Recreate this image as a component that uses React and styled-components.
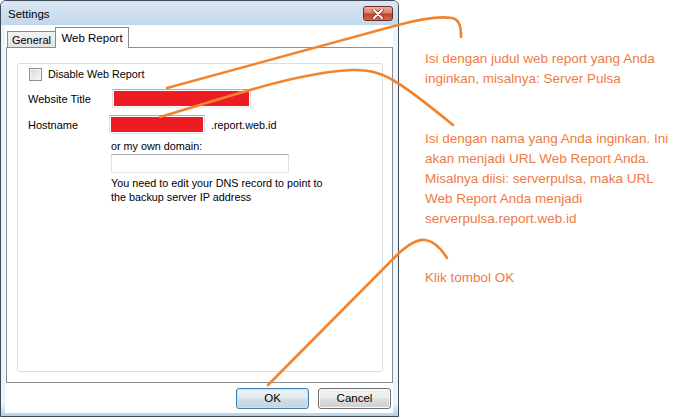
import React from 'react';
import styled, { createGlobalStyle } from 'styled-components';

const Global = createGlobalStyle`
body {
    margin: 0;
    background: #fff;
    font-family: 'Liberation Sans', Arial, sans-serif;
}
`

const Page = styled.div`
position: relative;
width: 699px;
height: 418px;
display: flex;
background: #fff;
overflow: hidden;
`

const Window = styled.div`
width: 397px;
height: 415px;
display: flex;
flex-direction: column;
border: 1px solid #3d4a57;
border-radius: 6px 6px 0 0;
background: linear-gradient(to bottom, #eef4f9 0%, #eef4f9 97%, #b3d0e8 100%);
font-size: 10.8px;
color: #000;
`

const TitleBar = styled.div`
height: 24px;
display: flex;
justify-content: space-between;
padding: 0 5px 0 7px;
border-radius: 5px 5px 0 0;
background: linear-gradient(to bottom, #dbe7f3, #c3d7eb);
`

const Title = styled.span`
font-size: 11.5px;
line-height: 26px;
`

const CloseButton = styled.div`
width: 28px;
height: 13px;
margin-top: 5px;
display: flex;
align-items: center;
justify-content: center;
border: 1px solid #6b2f26;
border-radius: 3px;
background: linear-gradient(to bottom, #eab1a3 0%, #dc8068 45%, #c0412a 55%, #d26d50 100%);
`

const Client = styled.div`
flex: 1;
display: flex;
flex-direction: column;
margin: 0 5px 3px 4px;
padding-left: 1px;
background: #fff;
`

const TabRow = styled.div`
height: 21px;
margin-top: 2px;
padding-left: 1px;
display: flex;
align-items: flex-end;
`

const Tab = styled.div`
position: ${p => p.$active ? 'relative' : 'static'};
z-index: ${p => p.$active ? 2 : 'auto'};
width: ${p => p.$w}px;
height: ${p => p.$active ? 21 : 17}px;
margin-left: ${p => p.$active ? -1 : 0}px;
box-sizing: border-box;
border: 1px solid #898c95;
border-bottom: none;
background: ${p => p.$active ? '#fff' : 'linear-gradient(to bottom, #f2f2f2, #e3e3e3)'};
text-align: center;
font-size: ${p => p.$active ? 11.5 : 11}px;
line-height: ${p => p.$active ? 20 : 17}px;
`

const Panel = styled.div`
position: relative;
z-index: 1;
height: 336px;
margin-top: -1px;
box-sizing: border-box;
border: 1px solid #898c95;
background: #fff;
display: flex;
`

const GroupBox = styled.div`
flex: 1;
margin: 15px 9px 10px 10px;
border: 1px solid #d5dfe5;
border-radius: 3px;
padding-top: 3px;
`

const CheckRow = styled.label`
display: flex;
align-items: center;
height: 14px;
padding-left: 11px;
`

const CheckBox = styled.span`
width: 11px;
height: 11px;
border: 1px solid #8e8f8f;
background: linear-gradient(135deg, #d8d8d8, #f8f8f8);
box-shadow: inset 0 0 0 1px #f4f4f4;
margin-right: 6px;
`

const FieldRow = styled.div`
display: flex;
align-items: center;
height: 19px;
margin-top: ${p => p.$mt}px;
padding-left: 10px;
`

const Label = styled.span`
width: 83px;
font-size: 11px;
`

const Input = styled.div`
width: ${p => p.$w}px;
height: 19px;
box-sizing: border-box;
margin-left: ${p => p.$ml || 0}px;
border: 1px solid;
border-color: #abadb3 #dbdfe6 #e3e9ef #e2e3ea;
background: #fff;
padding: ${p => p.$red ? '1px' : 0};
`

const RedFill = styled.div`
height: 100%;
background: #ed1c24;
`

const Suffix = styled.span`
margin-left: 6px;
`

const Indented = styled.div`
padding-left: 93px;
margin-top: ${p => p.$mt}px;
line-height: ${p => p.$lh || 13}px;
`

const ButtonRow = styled.div`
flex: 1;
display: flex;
justify-content: flex-end;
align-items: flex-start;
gap: 9px;
padding: 5px 2px 0 0;
`

const Button = styled.div`
width: 73px;
height: 21px;
box-sizing: border-box;
border: 1px solid ${p => p.$focus ? '#3c7fb1' : '#707070'};
border-radius: 3px;
background: ${p => p.$focus
    ? 'linear-gradient(to bottom, #eef3f7 0%, #e3ebf1 48%, #d2dde6 52%, #c6d3dd 100%)'
    : 'linear-gradient(to bottom, #f2f2f2 0%, #ebebeb 48%, #dddddd 52%, #cfcfcf 100%)'};
box-shadow: ${p => p.$focus ? 'inset 0 0 0 1px #bfe3f7' : 'inset 0 0 0 1px #fcfcfc'};
text-align: center;
line-height: 19px;
font-size: 11.5px;
`

const Notes = styled.div`
padding: 49px 0 0 26px;
display: flex;
flex-direction: column;
font-size: 13.5px;
line-height: 20px;
color: #f07a45;
`

const Note = styled.p`
margin: 0 0 ${p => p.$mb}px 0;
white-space: nowrap;
`

const Scribbles = styled.svg`
position: absolute;
left: 0;
top: 0;
pointer-events: none;
z-index: 5;
`

function CloseX() {
    return (
        <svg width="12" height="10" viewBox="0 0 12 10">
            <path d="M2 1 L10 9 M10 1 L2 9" stroke="#7a2a1e" strokeWidth="3.4" strokeLinecap="round" />
            <path d="M2 1 L10 9 M10 1 L2 9" stroke="#fff" strokeWidth="2" strokeLinecap="round" />
        </svg>
    )
}

export default function App() {
    return (
        <Page>
            <Global />
            <Window>
                <TitleBar>
                    <Title>Settings</Title>
                    <CloseButton><CloseX /></CloseButton>
                </TitleBar>
                <Client>
                    <TabRow>
                        <Tab $w={49}>General</Tab>
                        <Tab $w={74} $active>Web Report</Tab>
                    </TabRow>
                    <Panel>
                        <GroupBox>
                            <CheckRow>
                                <CheckBox />
                                Disable Web Report
                            </CheckRow>
                            <FieldRow $mt={8}>
                                <Label>Website Title</Label>
                                <Input $w={139} $ml={1} $red><RedFill /></Input>
                            </FieldRow>
                            <FieldRow $mt={7}>
                                <Label>Hostname</Label>
                                <Input $w={96} $ml={-2} $red><RedFill /></Input>
                                <Suffix>.report.web.id</Suffix>
                            </FieldRow>
                            <Indented $mt={6}>or my own domain:</Indented>
                            <Indented $mt={1}><Input $w={178} /></Indented>
                            <Indented $mt={3} $lh={14}>
                                You need to edit your DNS record to point to<br />
                                the backup server IP address
                            </Indented>
                        </GroupBox>
                    </Panel>
                    <ButtonRow>
                        <Button $focus>OK</Button>
                        <Button>Cancel</Button>
                    </ButtonRow>
                </Client>
            </Window>
            <Notes>
                <Note $mb={40}>
                    Isi dengan judul web report yang Anda<br />
                    inginkan, misalnya: Server Pulsa
                </Note>
                <Note $mb={39}>
                    Isi dengan nama yang Anda inginkan. Ini<br />
                    akan menjadi URL Web Report Anda.<br />
                    Misalnya diisi: serverpulsa, maka URL<br />
                    Web Report Anda menjadi<br />
                    serverpulsa.report.web.id
                </Note>
                <Note $mb={0}>Klik tombol OK</Note>
            </Notes>
            <Scribbles width="699" height="418" viewBox="0 0 699 418">
                <g fill="none" stroke="#f2842e" strokeWidth="2.6" strokeLinecap="round" strokeLinejoin="round">
                    <path d="M167 88 L398 25 C420 19 440 16 452 18 C460 20 461 27 461 37" />
                    <path d="M160 117 C230 96 300 72 352 70 C382 69 398 80 453 125" />
                    <path d="M268 385 L395 257 C406 246 416 239 425 240 C434 241 442 250 447 258" />
                </g>
            </Scribbles>
        </Page>
    )
}
